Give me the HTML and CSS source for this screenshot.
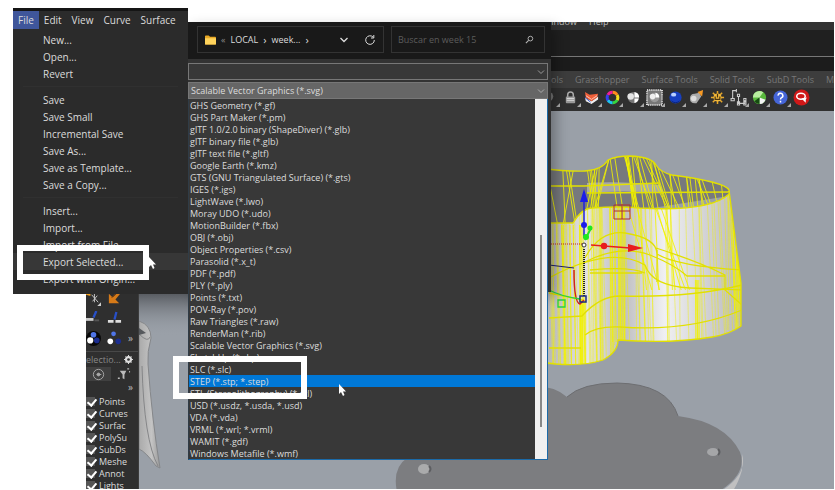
FILE: index.html
```html
<!DOCTYPE html>
<html lang="en">
<head>
    <meta charset="UTF-8">
    <meta name="viewport" content="width=device-width, initial-scale=1.0">
    <title>Export Selected</title>
    <link rel="stylesheet" href="styles.css">
</head>
<body>
    <main class="desktop">
        <section class="app">
            <nav class="app-menu">
                <a href="#">Window</a>
                <a href="#">Help</a>
            </nav>
            <div class="command-area"></div>
            <div class="command-line"></div>
            <nav class="tabs">
                <a href="#">ols</a>
                <a href="#">Grasshopper</a>
                <a href="#">Surface Tools</a>
                <a href="#">Solid Tools</a>
                <a href="#">SubD Tools</a>
                <a href="#">M</a>
            </nav>
            <div class="toolbar">
                <button class="tool" aria-label="Light">
                    <svg viewBox="0 0 16 16"><circle cx="7" cy="7" r="5" fill="#777"/></svg>
                </button>
                <button class="tool" aria-label="Lock">
                    <svg viewBox="0 0 16 16"><path d="M5 8V5a3 3 0 0 1 6 0v3" fill="none" stroke="#aaa" stroke-width="1.6"/><rect x="3" y="7" width="10" height="7" rx="1" fill="#999"/><path d="M4 9h8M4 11h8" stroke="#ddd"/></svg>
                </button>
                <button class="tool" aria-label="Layers">
                    <svg viewBox="0 0 16 16"><path d="M1 8l7 4 7-5v3l-7 5-6-3z" fill="#eee"/><path d="M1 2l5 3 9-1-1 4-6 4-6-4z" fill="#f0603a"/><path d="M2 6l6 4 6-4" fill="none" stroke="#ffc9b8"/><path d="M1 8l6 5" stroke="#3a5bd0"/></svg>
                </button>
                <button class="tool" aria-label="Color">
                    <svg viewBox="0 0 16 16" fill="none" stroke-width="3.2"><path d="M8 2.4a5.6 5.6 0 0 1 4.9 2.8" stroke="#ff8a1c"/><path d="M12.900 5.200a5.600 5.600 0 0 1 0 5.600" stroke="#f6e01e"/><path d="M12.900 10.800A5.600 5.600 0 0 1 8 13.600" stroke="#36d640"/><path d="M8 13.600a5.600 5.600 0 0 1-4.900-2.800" stroke="#1cc3f0"/><path d="M3.100 10.800a5.600 5.600 0 0 1 0-5.600" stroke="#3540f0"/><path d="M3.100 5.200A5.600 5.600 0 0 1 8 2.400" stroke="#f01c9a"/></svg>
                </button>
                <button class="tool" aria-label="Shaded">
                    <svg viewBox="0 0 16 16"><circle cx="8" cy="8" r="6" fill="#777"/><path d="M9 2a6 6 0 0 1 5 6H9zM9 9h4.500a6 6 0 0 1-4.500 4.800z" fill="#fff"/><circle cx="5" cy="7" r="3.500" fill="#e4e4e4"/></svg>
                </button>
                <button class="tool" aria-label="Render">
                    <svg class="wide" viewBox="0 0 18 18"><rect x="1" y="1" width="16" height="16" fill="#777" stroke="#ddd" stroke-width="2" stroke-dasharray="1 1"/><circle cx="9" cy="9" r="5" fill="#999"/><path d="M10 4a5 5 0 0 1 4 5h-4z" fill="#fff"/><circle cx="7" cy="8" r="3" fill="#eee"/></svg>
                </button>
                <button class="tool" aria-label="Material">
                    <svg viewBox="0 0 16 16"><circle cx="8" cy="8" r="6.500" fill="#173fc0"/><path d="M3 11a6 6 0 0 0 10 0 8 8 0 0 1-10 0z" fill="#081c66"/><ellipse cx="6" cy="5" rx="2.800" ry="2" fill="#b9d0ff"/></svg>
                </button>
                <button class="tool" aria-label="Spotlight">
                    <svg viewBox="0 0 16 16"><path d="M1 9q0-5 5-5l5-1 2 4-5 7q-7 1-7-5z" fill="#aaa"/><circle cx="5" cy="9" r="3" fill="#ddd"/><path d="M9 2l6-2-1 7z" fill="#f79a25"/></svg>
                </button>
                <button class="tool" aria-label="Options">
                    <svg viewBox="0 0 16 16"><path d="M8 1v14M1 8h14M3 3l10 10M13 3L3 13" stroke="#e5a62a" stroke-width="1.600"/><circle cx="8" cy="8" r="4.300" fill="#f0b83c"/><path d="M8 4v4M5.500 7v3h5V7" fill="none" stroke="#4a3410" stroke-width="1.300"/></svg>
                </button>
                <button class="tool" aria-label="Dimension">
                    <svg class="wide" viewBox="0 0 16 16" fill="none" stroke="#ccc"><path d="M6 1.500H2.500v8M8 7.500v6h6v-3"/><path d="M6 0v3M1 9h3v2H1zM7 5h2v2H7zM13 9h2v2h-2zM7 12h2v3H7zM13 12h2v3h-2z"/></svg>
                </button>
                <button class="tool" aria-label="Grasshopper">
                    <svg viewBox="0 0 16 16"><circle cx="8" cy="8" r="7" fill="#58b83c"/><path d="M8 8H1A7 7 0 0 1 12 2.300z" fill="#b9eda0"/><path d="M8 8l6.500 2.500A7 7 0 0 1 8 15z" fill="#f4f4f4"/><path d="M8 8v7A7 7 0 0 1 2.500 12z" fill="#174a12"/></svg>
                </button>
                <button class="tool" aria-label="Help">
                    <svg viewBox="0 0 16 16"><circle cx="8" cy="8" r="7.500" fill="#4565d8"/><path d="M5.500 6a2.500 2.500 0 1 1 3.600 2.200Q8 8.800 8 10M8 11.500v1.800" fill="none" stroke="#fff" stroke-width="1.600"/></svg>
                </button>
                <button class="tool tool-last" aria-label="Feedback">
                    <svg class="wide" viewBox="0 0 16 16"><circle cx="8" cy="8" r="7.500" fill="#d01818"/><ellipse cx="7.500" cy="6.800" rx="4" ry="2.800" fill="none" stroke="#fff" stroke-width="1.400"/><path d="M8 9l4 4v-3l1-2" fill="#fff"/></svg>
                </button>
            </div>

            <div class="workspace">
                <aside class="sidebar">
                    <div class="side-tools">
                        <button aria-label="Explode">
                            <svg viewBox="0 0 16 16"><path d="M0 3l4 1M3 0l1 5" stroke="#f0a020" stroke-width="2"/><path d="M6 4l7 8M12 5l-5 6M9 3v9" stroke="#c8c8c8"/><path d="M16 12v4h-4z" fill="#ccc"/></svg>
                        </button>
                        <button aria-label="Extract">
                            <svg viewBox="0 0 16 16"><path d="M2 3v10h11l-4-4 5-6-3-1-5 5z" fill="#d67a18"/><path d="M5 7l5-5" stroke="#7a3c08"/></svg>
                        </button>
                    </div>
                    <div class="side-tools">
                        <button aria-label="Trim">
                            <svg viewBox="0 0 16 16"><path d="M8 7L11 0" stroke="#2850c8" stroke-width="2.500"/><path d="M0 9h8" stroke="#ccc" stroke-width="3"/><path d="M9 10h5" stroke="#555" stroke-width="2"/></svg>
                        </button>
                        <button aria-label="Split">
                            <svg viewBox="0 0 16 16"><path d="M8 9l2-8" stroke="#2850c8" stroke-width="2.500"/><path d="M1 11h6M9 11h6" stroke="#ddd" stroke-width="3"/></svg>
                        </button>
                    </div>
                    <div class="side-tools">
                        <button aria-label="Group">
                            <svg viewBox="0 0 16 16"><circle cx="8" cy="8" r="8" fill="#080808"/><circle cx="8" cy="4" r="3" fill="#4f75e8"/><circle cx="4.500" cy="10" r="3.300" fill="#fff"/><circle cx="11.500" cy="10" r="3" fill="#1b2d90"/></svg>
                        </button>
                        <button aria-label="Ungroup">
                            <svg viewBox="0 0 16 16"><circle cx="7" cy="3" r="2.500" fill="#4f75e8"/><circle cx="3.500" cy="11" r="3" fill="#fff"/><circle cx="12" cy="11" r="3" fill="#1b2d90"/></svg>
                        </button>
                        <span class="more">»</span>
                    </div>
                    <div class="filter-title">
                        <span>electio...</span>
                        <button aria-label="Filter settings">
                            <svg viewBox="0 0 12 12"><circle cx="6" cy="6" r="3.500" fill="none" stroke="#ddd" stroke-width="2.500"/><path d="M6 0v12M0 6h12M2 2l8 8M10 2l-8 8" stroke="#ddd" stroke-width="1.300"/><circle cx="6" cy="6" r="1.800" fill="#333"/></svg>
                        </button>
                    </div>
                    <div class="filter-tools">
                        <button class="active" aria-label="Filter">
                            <svg viewBox="0 0 16 16" fill="none" stroke="#aaa"><circle cx="8" cy="8" r="5.500"/><path d="M6 8h5"/><circle cx="8" cy="8" r="1.500" fill="#aaa"/></svg>
                        </button>
                        <button aria-label="Sub-object filter">
                            <svg viewBox="0 0 16 16"><path d="M4 4h7L9 8v5l-2-1V8z" fill="#bbb"/><path d="M12 2h2M14 5h1M2 12h2" stroke="#bbb" stroke-width="1.500"/></svg>
                        </button>
                    </div>
                    <span class="more more-row">»</span>
                    <div class="filters">
                        <label><input type="checkbox" checked>Points</label>
                        <label><input type="checkbox" checked>Curves</label>
                        <label><input type="checkbox" checked>Surfac</label>
                        <label><input type="checkbox" checked>PolySu</label>
                        <label><input type="checkbox" checked>SubDs</label>
                        <label><input type="checkbox" checked>Meshe</label>
                        <label><input type="checkbox" checked>Annot</label>
                        <label><input type="checkbox" checked>Lights</label>
                    </div>
                </aside>

                <svg class="viewport" viewBox="139 111 695 378" preserveAspectRatio="xMinYMin slice">
                    <defs>
                        <linearGradient id="metal" x1="549" x2="742" y1="0" y2="0" gradientUnits="userSpaceOnUse">
                            <stop offset="0" stop-color="#b8b8ba"/>
                            <stop offset=".2" stop-color="#e4e4e6"/>
                            <stop offset=".38" stop-color="#bdbdc0"/>
                            <stop offset=".6" stop-color="#f0f0f2"/>
                            <stop offset="1" stop-color="#b8b8bb"/>
                        </linearGradient>
                        <linearGradient id="shade" x1="0" x2="0" y1="0" y2="1">
                            <stop offset="0" stop-color="#4c4f54"/>
                            <stop offset="1" stop-color="#9aa0a8" stop-opacity="0"/>
                        </linearGradient>
                        <linearGradient id="leaf" x1="0" x2="1" y1="0" y2="0">
                            <stop offset="0" stop-color="#aaa"/>
                            <stop offset=".6" stop-color="#c4c4c4"/>
                            <stop offset="1" stop-color="#999"/>
                        </linearGradient>
                        <clipPath id="wall">
                            <path d="M540 223H573Q582 208 592 208Q620 206 640 208Q710 212 729 194L741 283V326Q730 334 712 337Q670 344 618 340Q618 352 603 360Q578 368 540 362Z"/>
                        </clipPath>
                        <clipPath id="inside">
                            <path d="M540 168Q570 172 585 171Q602 170 608 160Q616 156 630 156Q652 157 656 165Q660 172 672 175Q725 182 729 190V194Q710 212 640 208Q620 206 592 208Q582 208 573 223H540Z"/>
                        </clipPath>
                    </defs>
                    <rect x="139" y="111" width="2000" height="1200" fill="#9aa0a8"/>
                    <rect x="139" y="290" width="50" height="46" fill="url(#shade)"/>

                    <!-- curved part on the left -->
                    <path d="M139 321Q151 325 151 338Q147 352 148 364Q152 420 160 468L156 466Q146 452 139 449Z" fill="url(#leaf)" stroke="#85878a"/>
                    <path d="M139 334Q148 343 150 337M142 366Q144 440 158 466" fill="none" stroke="#858688"/>
                    <path d="M139 328l7 5-7 2z" fill="#55585c"/>

                    <!-- flat base -->
                    <path d="M720 492Q748 474 742 454V470Q738 484 732 492Z" fill="#c0c0c1"/>
                    <path d="M397 492Q392 468 407 458L520 388Q550 382 567 397Q582 383 617 383Q668 384 678 416Q725 422 740 452Q748 474 718 492Z" fill="#7c7d80"/>
                    <path d="M567 397Q582 383 617 383Q668 384 678 416" fill="none" stroke="#6d6e71"/>
                    <ellipse cx="424" cy="469" rx="6" ry="5" fill="#aaabac"/>
                    <ellipse cx="713" cy="452" rx="6" ry="4" fill="#a5a6a8"/>
                    <path d="M718 449q3 3 0 6M429 466q3 3 0 6" fill="none" stroke="#5d5e61" stroke-width="2"/>

                    <!-- selected solid -->
                    <path d="M540 168Q570 172 585 171Q602 170 608 160Q616 156 630 156Q652 157 656 165Q660 172 672 175Q725 182 729 190V196L640 210H592L573 226H540Z" fill="#77797d"/>
                    <path d="M587 183Q620 181 660 185L664 193Q620 190 587 193Z" fill="#a8a9a8"/>
                    <path d="M540 223H573Q582 208 592 208Q620 206 640 208Q710 212 729 194L741 283V326Q730 334 712 337Q670 344 618 340Q618 352 603 360Q578 368 540 362Z" fill="url(#metal)"/>
                    <g clip-path="url(#inside)"><path id="inside-lines" class="wire wire-strong"/></g>
                    <g clip-path="url(#wall)">
                        <path id="wall-lines" class="wire wire-soft"/>
                        <path id="accent-lines" class="wire wire-strong"/>
                        <path class="edge" d="M585 258Q600 230 625 233Q657 238 657 254Q676 266 742 270M585 262Q620 244 650 255Q675 265 687 276H725M549 278Q610 245 645 265Q652 286 690 288L742 290M590 273H642M590 270Q630 266 645 273M549 318L582 316Q600 296 620 296Q690 298 742 285M585 335Q596 326 620 327Q690 332 742 310M549 348H581M657 250V282M549 293L583 300M656 248Q700 262 725 275V290L742 305"/>
                    </g>
                    <path class="edge" d="M540 168Q570 172 585 171Q602 170 608 160Q616 156 630 156Q652 157 656 165Q660 172 672 175Q725 182 729 190V194Q710 212 640 208Q620 206 592 208Q582 208 573 223H540M729 190L741 283V326Q730 334 712 337Q670 344 618 340Q618 352 603 360Q578 368 540 362M540 186H584L660 183M587 193L730 192"/>

                    <!-- transform gizmo -->
                    <path d="M549 244H582" stroke="#c02020" stroke-dasharray="1 1"/>
                    <path d="M584 249V296" stroke="#222" stroke-width="2" stroke-dasharray="1 1"/>
                    <path d="M584 238V196" stroke="#2020e0" stroke-width="1.500"/>
                    <path d="M580 202L584 189L588 202Z" fill="#1c1ce8"/>
                    <circle cx="584" cy="225" r="3" fill="#1c1ce8"/>
                    <path d="M585 240L591 228" stroke="#1ee81e" stroke-width="2"/>
                    <circle cx="590" cy="228" r="2.500" fill="#1ee81e"/>
                    <circle cx="586" cy="237" r="3" fill="#1ee81e"/>
                    <path d="M591 245L630 248" stroke="#e81c1c" stroke-width="1.500"/>
                    <circle cx="604" cy="246" r="3.200" fill="#e81c1c"/>
                    <path d="M628 244L643 248L628 252Z" fill="#e81c1c"/>
                    <circle cx="584" cy="245" r="2" fill="#fff" stroke="#333"/>
                    <path d="M614 205H630V219H614ZM614 211H630M622 204V219" fill="none" stroke="#b03030"/>
                    <path d="M549 265L574 268" stroke="#20206a"/>
                    <path d="M574 270Q574 303 580 304L584 300" fill="none" stroke="#d02020" stroke-width="1.500"/>
                    <path d="M549 290Q560 296 580 299M558 300h7v7h-7z" fill="none" stroke="#25d545" stroke-width="1.300"/>
                    <rect x="580" y="296" width="6" height="6" fill="none" stroke="#1b2a80" stroke-width="1.500"/>
                </svg>
            </div>
        </section>

        <section class="dialog">
            <div class="address-bar">
                <div class="path">
                    <svg class="folder" viewBox="0 0 12 10"><path d="M0 1q0-1 1-1h3l1.500 1.500H11q1 0 1 1V9q0 1-1 1H1Q0 10 0 9z" fill="#e8a825"/><path d="M0 3h12v6q0 1-1 1H1Q0 10 0 9z" fill="#ffd35c"/></svg>
                    <span class="dim">«</span>
                    <a href="#">LOCAL</a>
                    <span class="sep">›</span>
                    <a href="#">week...</a>
                    <span class="sep">›</span>
                    <button class="path-open" aria-label="Previous locations">
                        <svg viewBox="0 0 10 10"><path d="M1.500 3L5 6.500L8.500 3" fill="none" stroke="#ddd" stroke-width="1.300"/></svg>
                    </button>
                    <button aria-label="Refresh">
                        <svg viewBox="0 0 10 10"><path d="M8.200 2.200A4.300 4.300 0 1 0 9.300 5M8.800 0V3H6" fill="none" stroke="#ddd"/></svg>
                    </button>
                </div>
                <div class="search">
                    <input type="search" placeholder="Buscar en week 15" aria-label="Buscar en week 15">
                    <svg viewBox="0 0 10 10"><circle cx="6" cy="4" r="2.600" fill="none" stroke="#bbb"/><path d="M4 6L1 9" stroke="#bbb" stroke-width="1.200"/></svg>
                </div>
            </div>
            <div class="fields">
                <div class="combo">
                    <input type="text" aria-label="File name">
                    <svg viewBox="0 0 8 8"><path d="M1 2.500L4 5.500L7 2.500" fill="none" stroke="#999"/></svg>
                </div>
                <div class="combo combo-open">
                    <select aria-label="Save as type">
                        <option>Scalable Vector Graphics (*.svg)</option>
                    </select>
                    <svg viewBox="0 0 8 8"><path d="M1 2.500L4 5.500L7 2.500" fill="none" stroke="#aaa"/></svg>
                    <div class="types">
                        <ul role="listbox" aria-label="File types">
                            <li role="option">GHS Geometry (*.gf)</li>
                            <li role="option">GHS Part Maker (*.pm)</li>
                            <li role="option">glTF 1.0/2.0 binary (ShapeDiver) (*.glb)</li>
                            <li role="option">glTF binary file (*.glb)</li>
                            <li role="option">glTF text file (*.gltf)</li>
                            <li role="option">Google Earth (*.kmz)</li>
                            <li role="option">GTS (GNU Triangulated Surface) (*.gts)</li>
                            <li role="option">IGES (*.igs)</li>
                            <li role="option">LightWave (*.lwo)</li>
                            <li role="option">Moray UDO (*.udo)</li>
                            <li role="option">MotionBuilder (*.fbx)</li>
                            <li role="option">OBJ (*.obj)</li>
                            <li role="option">Object Properties (*.csv)</li>
                            <li role="option">Parasolid (*.x_t)</li>
                            <li role="option">PDF (*.pdf)</li>
                            <li role="option">PLY (*.ply)</li>
                            <li role="option">Points (*.txt)</li>
                            <li role="option">POV-Ray (*.pov)</li>
                            <li role="option">Raw Triangles (*.raw)</li>
                            <li role="option">RenderMan (*.rib)</li>
                            <li role="option">Scalable Vector Graphics (*.svg)</li>
                            <li role="option">SketchUp (*.skp)</li>
                            <li role="option">SLC (*.slc)</li>
                            <li role="option" class="selected" aria-selected="true">STEP (*.stp; *.step)</li>
                            <li role="option">STL (Stereolithography) (*.stl)</li>
                            <li role="option">USD (*.usdz, *.usda, *.usd)</li>
                            <li role="option">VDA (*.vda)</li>
                            <li role="option">VRML (*.wrl; *.vrml)</li>
                            <li role="option">WAMIT (*.gdf)</li>
                            <li role="option">Windows Metafile (*.wmf)</li>
                        </ul>
                        <div class="scrollbar"><div class="thumb"></div></div>
                    </div>
                </div>
            </div>
        </section>

        <section class="file-menu">
            <nav class="menu-bar">
                <button class="open">File</button>
                <button>Edit</button>
                <button>View</button>
                <button>Curve</button>
                <button>Surface</button>
            </nav>
            <div class="menu-items">
                <button>New...</button>
                <button>Open...</button>
                <button>Revert</button>
                <hr>
                <button>Save</button>
                <button>Save Small</button>
                <button>Incremental Save</button>
                <button>Save As...</button>
                <button>Save as Template...</button>
                <button>Save a Copy...</button>
                <hr>
                <button>Insert...</button>
                <button>Import...</button>
                <button>Import from File...</button>
                <button class="hover">Export Selected...</button>
                <button>Export with Origin...</button>
            </div>
        </section>

        <div class="frame frame-export"></div>
        <div class="frame frame-step"></div>
        <svg class="cursor cursor-menu" viewBox="0 0 8 12"><path d="M1 0v10l2-2 2 4 1.500-1L5 7.500h3z" fill="#fff"/></svg>
        <svg class="cursor cursor-list" viewBox="0 0 8 12"><path d="M1 0v10l2-2 2 4 1.500-1L5 7.500h3z" fill="#fff"/></svg>
    </main>

    <script>
        // small repeatable generator so the wireframe is always the same
        let seed = 7;
        function random() {
            seed = (seed * 16807) % 2147483647;
            return seed / 2147483647;
        }

        // nearly vertical lines between two heights
        function lines(count, left, right, top, bottom, lean) {
            let d = '';
            for (let i = 0; i < count; i++) {
                const x = left + random() * (right - left);
                d += `M${x.toFixed(1)} ${top}L${(x + lean * random()).toFixed(1)} ${bottom}`;
            }
            return d;
        }

        document.getElementById('inside-lines').setAttribute('d',
            lines(8, 545, 605, 160, 226, 14) + lines(6, 570, 612, 160, 226, -24) +
            lines(22, 606, 656, 150, 215, 34) + lines(10, 665, 698, 165, 215, 24) +
            lines(6, 694, 728, 170, 212, 16));
        document.getElementById('wall-lines').setAttribute('d',
            lines(44, 548, 618, 205, 370, 5) + lines(36, 614, 742, 190, 345, 8) +
            lines(18, 720, 742, 190, 330, 12));
        document.getElementById('accent-lines').setAttribute('d',
            lines(7, 550, 584, 225, 368, 6) + lines(6, 580, 586, 300, 368, 0) +
            lines(6, 610, 624, 200, 342, 2) + lines(9, 625, 675, 205, 290, 40) +
            lines(4, 685, 700, 280, 342, 1) + lines(5, 720, 738, 200, 310, 10));
    </script>
</body>
</html>
```
FILE: styles.css
```css
* {
    box-sizing: border-box;
}

body {
    margin: 0;
    background-color: #fff;
    font-family: 'Open Sans', 'Noto Sans', sans-serif;
    font-size: 9px;
    color: #dcdcdc;
}

button,
input,
select {
    font: inherit;
    color: inherit;
    background: none;
    border: none;
    border-radius: 0;
    margin: 0;
    padding: 0;
}

a {
    color: inherit;
    text-decoration: none;
}

svg {
    display: block;
}

.desktop {
    position: relative;
    height: 100vh;
    overflow: hidden;
}

/* modelling window */
.app {
    position: absolute;
    top: 22px;
    right: 1px;
    bottom: 1px;
    left: 86px;
    display: flex;
    flex-direction: column;
    overflow: hidden;
    background-color: #1c1c1c;
}

.app-menu {
    display: flex;
    gap: 12px;
    height: 8px;
    padding-left: 457px;
    line-height: 0;
    background-color: #333;
    color: #bbb;
}

.command-area {
    height: 27px;
    background-color: #202020;
    border-bottom: 1px solid #777;
}

.command-line {
    height: 14px;
    background-color: #1c1c1c;
}

.tabs {
    display: flex;
    gap: 12px;
    height: 17px;
    padding-left: 465px;
    line-height: 18px;
    white-space: nowrap;
    overflow: hidden;
    background-color: #3d3d3d;
    color: #777;
}

.toolbar {
    display: flex;
    height: 23px;
    padding-left: 453px;
    background-color: #303030;
}

.tool {
    position: relative;
    display: flex;
    justify-content: center;
    align-items: center;
    width: 21px;
    height: 18px;
    flex: none;
}

.tool svg {
    width: 15px;
    height: 15px;
}

.tool .wide {
    width: 17px;
    height: 17px;
}

.tool::after {
    content: '';
    position: absolute;
    right: 0;
    bottom: -1px;
    border: 2px solid #aaa;
    border-top-color: transparent;
    border-left-color: transparent;
}

.tool-last::after {
    display: none;
}

.workspace {
    display: flex;
    flex: 1;
    min-height: 0;
}

.viewport {
    flex: 1;
    min-width: 0;
    height: 100%;
}

.wire {
    fill: none;
    stroke: #f2f200;
}

.wire-soft {
    stroke-width: 1;
    opacity: 0.45;
}

.wire-strong {
    stroke-width: 1;
    opacity: 0.85;
}

.edge {
    fill: none;
    stroke: #e2e000;
    stroke-width: 1.3;
}

/* left tool strip */
.sidebar {
    width: 53px;
    flex: none;
    padding-top: 177px;
    overflow: hidden;
    background-color: #2f2f2f;
    border-right: 1px solid #3c3c3c;
}

.side-tools {
    display: flex;
    align-items: center;
    gap: 6px;
    height: 20px;
}

.side-tools svg,
.filter-tools svg {
    width: 15px;
    height: 15px;
}

.more {
    color: #bbb;
    font-size: 10px;
}

.more-row {
    display: block;
    padding-right: 5px;
    text-align: right;
    line-height: 12px;
}

.filter-title {
    display: flex;
    justify-content: space-between;
    align-items: center;
    height: 16px;
    margin-top: 3px;
    padding-right: 5px;
    border-top: 1px solid #484848;
    color: #888;
}

.filter-title svg {
    width: 9px;
    height: 9px;
}

.filter-tools {
    display: flex;
    height: 14px;
}

.filter-tools button {
    display: flex;
    justify-content: center;
    align-items: center;
    width: 25px;
}

.filter-tools .active {
    background-color: #404040;
}

.filters {
    padding-top: 2px;
}

.filters label {
    display: flex;
    align-items: center;
    gap: 4px;
    height: 12px;
    white-space: nowrap;
}

.filters input {
    appearance: none;
    position: relative;
    width: 9px;
    height: 9px;
    flex: none;
    background-color: #555;
}

.filters input:checked::after {
    content: '';
    position: absolute;
    top: 0;
    left: 3px;
    width: 4px;
    height: 7px;
    border: solid #fff;
    border-width: 0 2px 2px 0;
    transform: rotate(40deg);
}

/* save dialog */
.dialog {
    position: absolute;
    top: 22px;
    left: 188px;
    width: 363px;
    min-height: 270px;
    background-color: #333;
    box-shadow: 5px 5px 12px rgba(0, 0, 0, 0.3);
}

.address-bar {
    display: flex;
    gap: 7px;
    padding: 4px 6px 6px 9px;
    background-color: #191919;
}

.path,
.search {
    display: flex;
    align-items: center;
    min-width: 0;
    height: 27px;
    border: 1px solid #333;
}

.path {
    flex: 5;
    gap: 5px;
    padding: 0 8px 0 7px;
}

.path svg {
    width: 10px;
    height: 10px;
}

.path .folder {
    width: 11px;
}

.path .dim {
    color: #888;
}

.path .sep {
    font-size: 11px;
}

.path-open {
    margin-left: auto;
    margin-right: 11px;
}

.search {
    flex: 4;
    padding: 0 10px 0 6px;
}

.search input {
    flex: 1;
    min-width: 0;
}

.search input::placeholder {
    color: #5c5c5c;
}

.search svg {
    width: 9px;
    height: 9px;
}

.fields {
    display: flex;
    flex-direction: column;
    gap: 2px;
    padding: 4px 3px 0 0;
}

.combo {
    position: relative;
    display: flex;
    align-items: center;
    height: 17px;
    border: 1px solid #777;
    background-color: #383838;
}

.combo input,
.combo select {
    appearance: none;
    flex: 1;
    min-width: 0;
    height: 100%;
    padding-left: 2px;
}

.combo > svg {
    width: 8px;
    height: 8px;
    margin-right: 2px;
}

.combo-open {
    background-color: #666;
}

/* open list hangs over the dialog's lower edge */
.types {
    position: absolute;
    top: 16px;
    left: -1px;
    right: -1px;
    display: flex;
    background-color: #383838;
    border: 1px solid #1b6aa8;
    border-top: none;
    border-left-color: #303c46;
}

.types ul {
    flex: 1;
    margin: 0;
    padding: 0;
    list-style: none;
}

.types li {
    height: 12px;
    padding-left: 1px;
    line-height: 13px;
}

.types .selected {
    background-color: #0078d7;
}

.scrollbar {
    display: flex;
    flex-direction: column;
    align-items: center;
    width: 12px;
    padding: 136px 0 32px;
    background-color: #f0f0f0;
}

.thumb {
    flex: 1;
    width: 2px;
    background-color: #888;
}

/* file menu */
.file-menu {
    position: absolute;
    top: 8px;
    left: 13px;
    width: 175px;
    background-color: #2b2b2b;
    border-top: 3px solid #151515;
    font-size: 10px;
}

.menu-bar {
    display: flex;
    height: 18px;
}

.menu-bar button {
    padding: 0 5px;
}

.menu-bar .open {
    background-color: #3f569b;
}

.menu-items {
    display: flex;
    flex-direction: column;
    padding: 2px 0 7px;
}

.menu-items button {
    height: 17px;
    padding-left: 30px;
    text-align: left;
}

.menu-items hr {
    width: 155px;
    height: 1px;
    margin: 4px auto;
    border: none;
    background-color: #303030;
}

.menu-items .hover {
    background-color: #373737;
}

/* white callout frames */
.frame {
    position: absolute;
    border: 6px solid #fff;
}

.frame-export {
    top: 245px;
    left: 17px;
    width: 132px;
    height: 35px;
}

.frame-step {
    top: 356px;
    left: 173px;
    width: 134px;
    height: 43px;
}

.cursor {
    position: absolute;
    width: 8px;
    height: 12px;
}

.cursor-menu {
    top: 257px;
    left: 148px;
}

.cursor-list {
    top: 384px;
    left: 338px;
}
```
